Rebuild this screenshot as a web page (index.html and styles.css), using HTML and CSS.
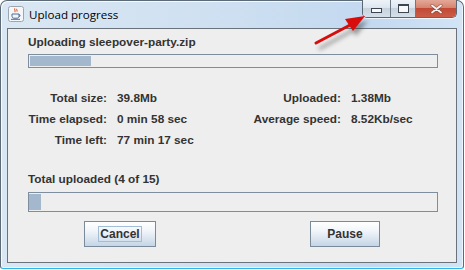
FILE: index.html
```html
<!DOCTYPE html>
<html lang="en">
<head>
    <meta charset="UTF-8">
    <title>Upload progress</title>
    <link rel="stylesheet" href="styles.css">
</head>
<body>
    <div class="window">
        <div class="titlebar">
            <svg class="app-icon" width="16" height="16" viewBox="0 0 16 16">
                <rect x="0.5" y="0.5" width="15" height="15" rx="2" fill="#f4f6f8" stroke="#9aa6b2"/>
                <path d="M7 2.5c-1.5 1.2 1.2 2 -0.3 3.6M9 3c-1 1 0.8 1.5 -0.2 2.6" stroke="#e2602a" stroke-width="1.1" fill="none"/>
                <path d="M4 8h7v2.2c0 1.2-1 2-2 2H6c-1 0-2-0.8-2-2z" fill="none" stroke="#4a6e9a" stroke-width="1"/>
                <path d="M11 8.6c1.4 0 1.4 2 0 2" stroke="#4a6e9a" fill="none"/>
                <path d="M3 13.3h9" stroke="#4a6e9a" stroke-width="1"/>
            </svg>
            <span class="title">Upload progress</span>
            <div class="caption-buttons">
                <div class="cap-btn min"><span class="min-glyph"></span></div>
                <div class="cap-btn max"><span class="max-glyph"></span></div>
                <div class="cap-btn close">
                    <svg width="13" height="10" viewBox="0 0 13 10">
                        <path d="M2 1.5l9 7M11 1.5l-9 7" stroke="#7a3a30" stroke-width="3.2" stroke-linecap="round" opacity="0.6"/>
                        <path d="M2 1.5l9 7M11 1.5l-9 7" stroke="#f4f4f4" stroke-width="1.8" stroke-linecap="round"/>
                    </svg>
                </div>
            </div>
        </div>

        <div class="client">
            <div class="label">Uploading sleepover-party.zip</div>
            <div class="progress small"><div class="fill" style="width: 15%"></div></div>

            <div class="stats">
                <span class="key">Total size:</span>
                <span class="val">39.8Mb</span>
                <span class="key">Uploaded:</span>
                <span class="val">1.38Mb</span>

                <span class="key">Time elapsed:</span>
                <span class="val">0 min 58 sec</span>
                <span class="key">Average speed:</span>
                <span class="val">8.52Kb/sec</span>

                <span class="key">Time left:</span>
                <span class="val">77 min 17 sec</span>
                <span></span>
                <span></span>
            </div>

            <div class="label total">Total uploaded (4 of 15)</div>
            <div class="progress large"><div class="fill" style="width: 3%"></div></div>

            <div class="buttons">
                <button class="btn cancel"><span class="focus">Cancel</span></button>
                <button class="btn pause">Pause</button>
            </div>
        </div>
    </div>

    <svg class="arrow" width="80" height="50" viewBox="0 0 80 50">
        <defs>
            <filter id="shadow" x="-30%" y="-30%" width="160%" height="180%">
                <feGaussianBlur stdDeviation="2"/>
            </filter>
        </defs>
        <g opacity="0.45" filter="url(#shadow)" transform="translate(3,5)">
            <path d="M4 39L40 19" stroke="#333" stroke-width="3"/>
            <path d="M53 11L33 14L41 26z" fill="#333"/>
        </g>
        <path d="M4 38L40 19" stroke="#d90c0c" stroke-width="3" stroke-linecap="round"/>
        <path d="M53 11L33 14L41 26z" fill="#d90c0c"/>
    </svg>
</body>
</html>
```

FILE: styles.css
```css
* {
    box-sizing: border-box;
    margin: 0;
    padding: 0;
}

body {
    background: #ffffff;
    width: 465px;
    height: 270px;
    position: relative;
    overflow: hidden;
    font-family: 'Liberation Sans', Arial, sans-serif;
}

.window {
    width: 464px;
    height: 269px;
    display: flex;
    flex-direction: column;
    padding: 0 6px 5px 6px;
    border: 1px solid #5d6b78;
    border-bottom-color: #2fb6e8;
    border-radius: 7px 7px 3px 3px;
    background: linear-gradient(to right, #dae7f3 0%, #cfe0f1 45%, #c3d9f0 80%, #d2e4f6 100%);
    box-shadow: inset 1px 1px 0 rgba(255, 255, 255, 0.8), inset -1px -1px 0 rgba(255, 255, 255, 0.6);
}

.titlebar {
    height: 27px;
    display: flex;
    align-items: flex-start;
}

.app-icon {
    margin: 5px 0 0 1px;
}

.title {
    margin: 6px 0 0 5px;
    font-family: 'Open Sans', 'Noto Sans', sans-serif;
    font-size: 11.6px;
    line-height: 16px;
    color: #000;
}

.caption-buttons {
    margin-left: auto;
    margin-top: -1px;
    display: flex;
    height: 18px;
    border: 1px solid #5a6672;
    border-top: none;
    border-radius: 0 0 5px 5px;
    overflow: hidden;
    box-shadow: 0 1px 0 rgba(255, 255, 255, 0.7);
}

.cap-btn {
    display: flex;
    align-items: center;
    justify-content: center;
    height: 17px;
    background: linear-gradient(#eef3f8 0%, #dde6ef 45%, #c6d2de 50%, #d5e0ea 100%);
}

.cap-btn.min {
    width: 28px;
    border-right: 1px solid #6d7a86;
}

.cap-btn.max {
    width: 25px;
    border-right: 1px solid #6d7a86;
}

.cap-btn.close {
    width: 40px;
    background: linear-gradient(#e3a898 0%, #d68470 45%, #c04a36 50%, #cc5c45 100%);
}

.min-glyph {
    width: 11px;
    height: 5px;
    margin-top: 4px;
    border: 1px solid #3d4650;
    background: #f6f8fa;
}

.max-glyph {
    width: 11px;
    height: 9px;
    border: 1px solid #3d4650;
    border-top-width: 2px;
    background: #f6f8fa;
}

.client {
    flex: 1;
    background: #eeeeee;
    border: 1px solid #6a737c;
    padding: 6px 18px 0 20px;
    display: flex;
    flex-direction: column;
}

.label {
    font-size: 11.8px;
    font-weight: bold;
    line-height: 14px;
    color: #333333;
}

.progress {
    margin-top: 5px;
    height: 14px;
    border: 1px solid #7e8e9e;
    padding: 1px;
    background: #eeeeee;
}

.progress .fill {
    height: 100%;
    background: #a3b8cc;
}

.progress.large {
    margin-top: 6px;
    height: 20px;
    padding: 1px 0;
}

.stats {
    margin-top: 19px;
    display: grid;
    grid-template-columns: 79px 116px 98px 1fr;
    grid-auto-rows: 21px;
    column-gap: 10px;
    align-items: center;
    font-size: 11.8px;
    font-weight: bold;
    color: #333333;
}

.stats .key {
    text-align: right;
    white-space: nowrap;
}

.label.total {
    margin-top: 22px;
}

.buttons {
    margin-top: 9px;
    display: flex;
    justify-content: center;
    gap: 154px;
    padding-right: 2px;
}

.btn {
    height: 26px;
    border: 1px solid #7a8a99;
    background: linear-gradient(#ffffff 0%, #f2f6fa 35%, #d6e2ee 75%, #c4d5e6 100%);
    font-family: 'Liberation Sans', Arial, sans-serif;
    font-size: 12px;
    font-weight: bold;
    color: #333333;
    display: flex;
    align-items: center;
    justify-content: center;
}

.btn.cancel {
    width: 72px;
}

.btn.pause {
    width: 70px;
}

.focus {
    border: 1px solid #a3bdd6;
    padding: 1px 1px;
    line-height: 12px;
}

.arrow {
    position: absolute;
    left: 312px;
    top: 5px;
}
```
